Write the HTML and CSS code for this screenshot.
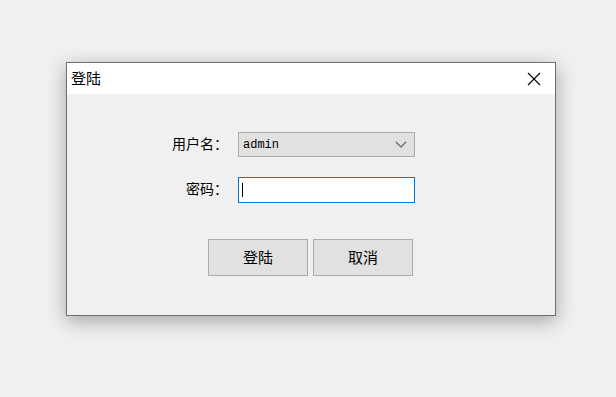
FILE: index.html
```html
<!DOCTYPE html>
<html lang="zh-CN">
<head>
<meta charset="utf-8">
<title>登陆</title>
<link rel="stylesheet" href="styles.css">
</head>
<body>
<div class="window">
  <div class="titlebar">
    <span class="title">登陆</span>
    <span class="close" aria-label="关闭">
      <svg width="14" height="14" viewBox="0 0 14 14"><path d="M1 1 L13 13 M13 1 L1 13" stroke="#000" stroke-width="1.1" fill="none"/></svg>
    </span>
  </div>
  <div class="content">
    <div class="form">
      <label class="label">用户名：</label>
      <div class="combo">
        <span class="combo-text">admin</span>
        <svg class="chev" width="12" height="7" viewBox="0 0 12 7"><path d="M1 1 L6 6 L11 1" stroke="#606060" stroke-width="1.2" fill="none"/></svg>
      </div>
      <label class="label">密码：</label>
      <div class="input"><span class="caret"></span></div>
    </div>
    <div class="buttons">
      <button class="btn">登陆</button>
      <button class="btn">取消</button>
    </div>
  </div>
</div>
</body>
</html>
```
FILE: styles.css
```css
html, body {
  margin: 0;
  padding: 0;
  background: #f0f0f0;
  font-family: "Noto Sans CJK SC", "Noto Sans", sans-serif;
}
body {
  padding: 62px 0 0 66px;
  min-height: 397px;
  box-sizing: border-box;
}
.window {
  width: 488px;
  height: 252px;
  border: 1px solid #6f6f6f;
  background: #f0f0f0;
  box-shadow: 0 5px 18px rgba(0, 0, 0, 0.32);
  display: flex;
  flex-direction: column;
}
.titlebar {
  height: 31px;
  background: #ffffff;
  display: flex;
  align-items: center;
  justify-content: space-between;
  padding: 0 14px 0 4px;
}
.title {
  font-size: 15px;
  color: #000;
  line-height: 1;
  margin-top: -3px;
}
.close {
  display: flex;
  width: 14px;
  height: 14px;
}
.content {
  flex: 1;
  padding-top: 38px;
}
.form {
  display: grid;
  grid-template-columns: 161px 177px;
  column-gap: 10px;
  row-gap: 20px;
  align-items: center;
}
.label {
  justify-self: end;
  font-size: 14px;
  color: #000;
  line-height: 1;
  margin-bottom: 4px;
}
.combo {
  box-sizing: border-box;
  height: 25px;
  border: 1px solid #adadad;
  background: #e1e1e1;
  display: flex;
  align-items: center;
  justify-content: space-between;
  padding: 0 7px 0 4px;
}
.combo-text {
  font-family: "Liberation Mono", monospace;
  font-size: 12px;
  color: #000;
}
.chev {
  display: block;
}
.input {
  box-sizing: border-box;
  height: 26px;
  border: 1px solid #0078d7;
  background: #ffffff;
  display: flex;
  align-items: center;
  padding-left: 3px;
}
.caret {
  width: 1px;
  height: 14px;
  background: #000;
}
.buttons {
  display: flex;
  gap: 5px;
  padding: 36px 0 0 141px;
}
.btn {
  box-sizing: border-box;
  width: 100px;
  height: 37px;
  border: 1px solid #adadad;
  background: #e1e1e1;
  font-family: "Noto Sans CJK SC", sans-serif;
  font-size: 15px;
  color: #000;
  padding: 0 0 2px;
  margin: 0;
}
```
